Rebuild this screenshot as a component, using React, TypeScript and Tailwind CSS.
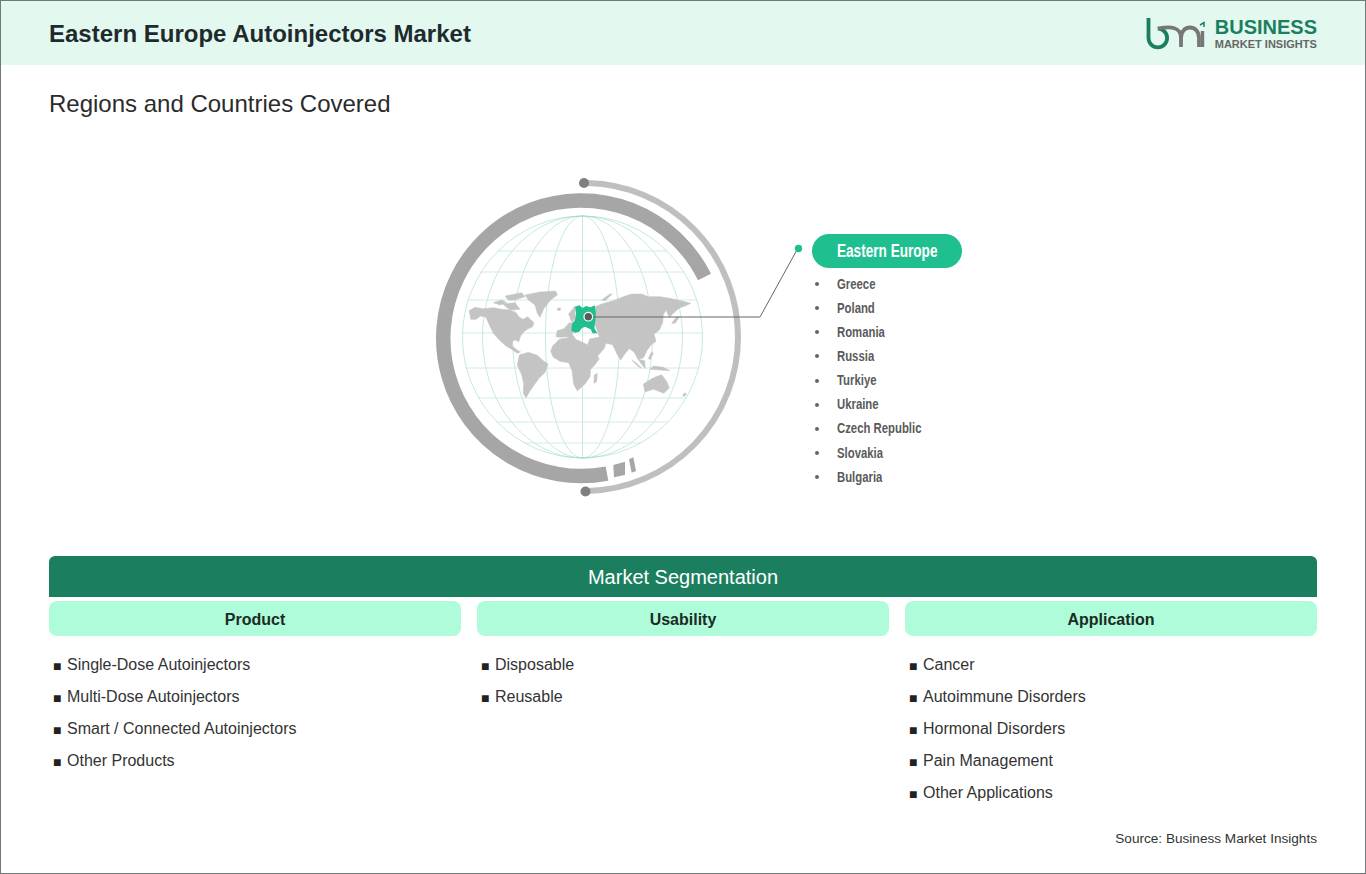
const countries = ["Greece", "Poland", "Romania", "Russia", "Turkiye", "Ukraine", "Czech Republic", "Slovakia", "Bulgaria"];

const segments = [
  {
    title: "Product",
    items: ["Single-Dose Autoinjectors", "Multi-Dose Autoinjectors", "Smart / Connected Autoinjectors", "Other Products"],
  },
  {
    title: "Usability",
    items: ["Disposable", "Reusable"],
  },
  {
    title: "Application",
    items: ["Cancer", "Autoimmune Disorders", "Hormonal Disorders", "Pain Management", "Other Applications"],
  },
];

// map outlines, traced in zoomed coordinates (3x)
const westLand = [
  "27,92 45,82 70,86 100,83 125,88 150,90 168,98 178,112 190,118 203,110 222,128 218,140 203,147 192,155 182,168 176,186 168,180 158,182 156,196 168,208 182,216 172,220 155,208 138,198 118,180 100,160 88,135 78,112 62,108 48,118 32,118 30,105",
  "100,68 125,60 140,68 120,75",
  "135,48 185,38 195,50 165,60 145,60",
  "128,72 165,68 180,88 150,90",
  "195,45 240,36 287,33 292,45 272,60 252,85 240,112 232,100 225,75 205,60",
  "178,225 205,217 232,226 250,242 264,252 256,276 236,296 222,316 208,336 198,354 190,340 191,310 184,282 172,256",
  "278,198 298,178 330,172 352,180 378,192 396,210 418,236 405,254 392,268 390,290 375,312 352,333 341,312 336,272 326,248 300,244 280,232 272,214",
  "403,285 412,280 410,305 402,310",
  "288,170 292,152 312,146 328,128 340,130 338,165 348,178 320,170 302,172",
  "326,102 345,78 345,115 336,128",
  "292,85 302,84 300,92 293,91",
];

const eastLand = [
  "76,80 95,72 130,62 160,50 185,42 215,42 235,50 270,50 300,55 340,64 362,70 346,78 328,84 314,96 298,112 288,90 280,104 278,128 268,150 252,162 258,184 244,194 232,210 220,234 204,238 192,216 178,206 166,220 152,240 142,224 128,194 108,190 102,206 78,234 52,194 60,176 88,172 82,152 76,137",
  "204,238 216,254 226,266 224,242",
  "185,240 205,260 215,264 195,246",
  "240,268 300,272 280,262 250,258",
  "235,235 245,215 250,220 240,240",
  "305,130 320,110 328,112 315,130",
  "95,60 120,42 127,42 105,62",
  "220,312 245,296 258,290 275,284 290,304 298,324 282,340 250,328 225,336",
  "338,345 345,338 350,342 342,350",
];

const meridians = [120, 100, 70, 37];
const parallels = [251, 272, 300, 333, 368, 398, 422, 443];

const Globe = () => {
  return (
    <svg width="373" height="330" viewBox="430 170 373 330" className="shrink-0">
      {/* grid */}
      <g fill="none" stroke="#9ed8d0" strokeWidth="0.6">
        {meridians.map((rx) => (
          <ellipse key={rx} cx="582.5" cy="337" rx={rx} ry="121" />
        ))}
        <line x1="582.5" y1="216" x2="582.5" y2="458" />
      </g>
      <g stroke="#c6ebe6" strokeWidth="0.9">
        {parallels.map((y) => {
          const half = Math.sqrt(121 * 121 - (y - 337) * (y - 337));
          return <line key={y} x1={582.5 - half} y1={y} x2={582.5 + half} y2={y} />;
        })}
      </g>

      {/* rings */}
      <path d="M704.5 277 A137.8 137.8 0 1 0 607 473.6" fill="none" stroke="#a6a6a6" strokeWidth="14.5" />
      <polygon points="613.3,465 625,461.7 625,475 614,477.3" fill="#a6a6a6" />
      <polygon points="629,459.3 633.3,457.3 636,471 631.7,472.7" fill="#a6a6a6" />
      <path d="M588 183 A154 154 0 0 1 738 337 A154 154 0 0 1 588 491" fill="none" stroke="#bfbfbf" strokeWidth="6" />
      <circle cx="584" cy="183" r="5" fill="#808080" />
      <circle cx="585.5" cy="491.5" r="5" fill="#808080" />

      {/* map */}
      <g transform="translate(460 280) scale(0.3333)" fill="#c4c4c4" stroke="#c4c4c4" strokeWidth="1.5" strokeLinejoin="round">
        {westLand.map((points) => (
          <polygon key={points} points={points} />
        ))}
      </g>
      <g transform="translate(570 280) scale(0.3333)" fill="#c4c4c4" stroke="#c4c4c4" strokeWidth="1.5" strokeLinejoin="round">
        {eastLand.map((points) => (
          <polygon key={points} points={points} />
        ))}
      </g>
      <polygon
        transform="translate(460 280) scale(0.3333)"
        points="345,80 358,76 368,84 378,78 392,82 404,76 408,100 406,125 403,145 412,160 398,160 392,148 375,140 365,145 358,155 345,158 334,152 336,132 345,120 348,100"
        fill="#1fbf8f"
      />

      {/* callout */}
      <polyline points="592,317 760,317 798,248" fill="none" stroke="#666666" strokeWidth="1" />
      <circle cx="588.3" cy="316.7" r="4.3" fill="#5a5a5a" stroke="#ffffff" strokeWidth="1.2" />
      <circle cx="798.5" cy="248.5" r="3.7" fill="#1fbf8f" />
    </svg>
  );
};

const Logo = () => {
  return (
    <div className="flex items-center gap-[9px]">
      <svg width="60" height="34" viewBox="1145 16 60 34" className="shrink-0">
        <path d="M1147.5 18 V38 A9.3 9.3 0 1 0 1156.8 28.7" fill="none" stroke="#1b7f5f" strokeWidth="3.8" />
        <path d="M1156.8 28.7 C1170 26 1180 27 1180 38 V47" fill="none" stroke="#777777" strokeWidth="3.8" />
        <path d="M1180 38 C1180 24 1198 24 1198 38 V47" fill="none" stroke="#777777" strokeWidth="3.8" />
        <path d="M1201.5 31 V47" fill="none" stroke="#777777" strokeWidth="3.4" />
        <path d="M1199 25 L1203 22.5 L1203 27" fill="none" stroke="#1b7f5f" strokeWidth="1.5" />
      </svg>
      <div className="flex flex-col gap-[1px] font-['Liberation_Sans',sans-serif] font-bold">
        <span className="text-[20px] leading-[20px] text-[#1b7f5f]">BUSINESS</span>
        <span className="text-[11px] leading-[12px] text-[#666666]">MARKET INSIGHTS</span>
      </div>
    </div>
  );
};

export default function App() {
  return (
    <div className="h-[874px] border border-[#6f7a7a] bg-white font-['Liberation_Sans',Arial,sans-serif] overflow-hidden">
      <div className="flex h-[64px] items-center justify-between bg-[#e3f8ef] px-12">
        <h1 className="pt-[2px] text-[24px] font-bold text-[#1f2a2e]">Eastern Europe Autoinjectors Market</h1>
        <Logo />
      </div>

      <div className="px-12">
        <h2 className="mt-[25px] text-[24px] leading-[28px] text-[#2b2b2b]">Regions and Countries Covered</h2>

        <div className="mt-[52px] flex h-[386px] items-start pl-[381px]">
          <Globe />
          <div className="ml-[9px] mt-[64px] w-[150px]">
            <div className="flex h-[34px] items-center rounded-full bg-[#1fbf8f] pl-[25px] text-[18px] font-bold text-white">
              <span className="origin-left scale-x-[0.755] whitespace-nowrap">Eastern Europe</span>
            </div>
            <ul className="mt-[4px] text-[14px] font-bold text-[#5a5a5a]">
              {countries.map((country) => (
                <li key={country} className="flex h-[24.15px] items-center">
                  <span className="ml-[3px] h-[4px] w-[4px] rounded-full bg-[#666666]" />
                  <span className="ml-[18px] origin-left scale-x-[0.81] whitespace-nowrap">{country}</span>
                </li>
              ))}
            </ul>
          </div>
        </div>

        <div className="flex h-[41px] items-center justify-center rounded-t-md bg-[#1b7f5f] text-[20px] text-white">
          Market Segmentation
        </div>
        <div className="mt-[4px] grid grid-cols-3 gap-4">
          {segments.map((segment) => (
            <div key={segment.title}>
              <div className="flex h-[35px] items-center justify-center rounded-lg bg-[#aefcd9] pt-[2px] text-[16px] font-bold text-[#1c2b25]">
                {segment.title}
              </div>
              <ul className="mt-[13px] pl-[4px] text-[16px] text-[#333333]">
                {segment.items.map((item) => (
                  <li key={item} className="flex h-[32px] items-center">
                    <span className="w-[14px] shrink-0 pt-[3px] text-[14px] text-[#222222]">■</span>
                    {item}
                  </li>
                ))}
              </ul>
            </div>
          ))}
        </div>
        <p className="mt-[21px] text-right text-[13.6px] leading-[18px] text-[#333333]">Source: Business Market Insights</p>
      </div>
    </div>
  );
}
